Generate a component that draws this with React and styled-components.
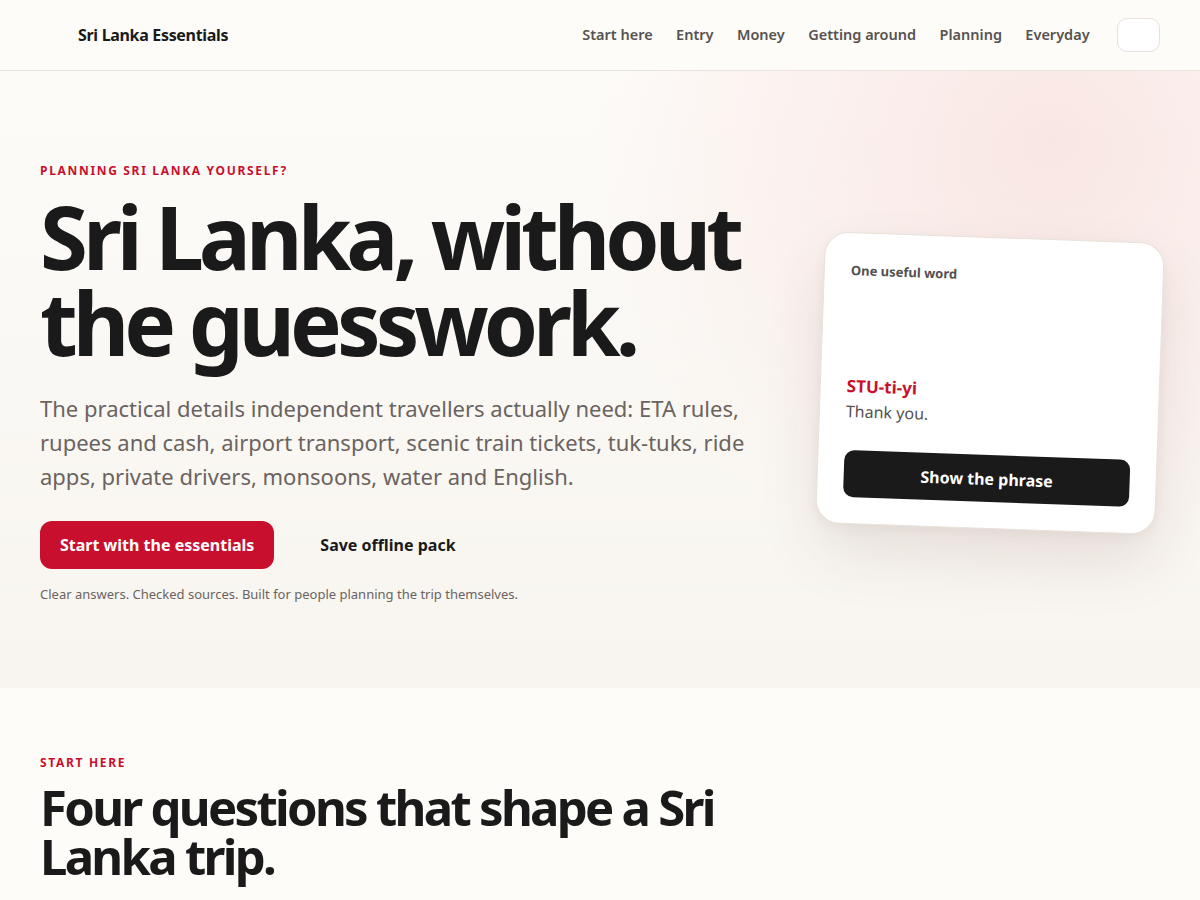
import styled, { createGlobalStyle } from "styled-components";

const GlobalStyle = createGlobalStyle`
  * { box-sizing: border-box; }
  body {
    margin: 0;
    font-family: "Noto Sans", "Open Sans", sans-serif;
    background: #fdfcf9;
    color: #1a1a1a;
  }
`;

const Header = styled.header`
  height: 71px;
  padding: 0 40px;
  display: flex;
  align-items: center;
  justify-content: space-between;
  background: #fdfcf9;
  border-bottom: 1px solid #e9e3de;
`;

const Brand = styled.a`
  display: flex;
  align-items: center;
  gap: 10px;
  font-size: 16px;
  font-weight: 700;
  letter-spacing: -0.02em;
  color: #1a1a1a;
  text-decoration: none;
`;

const BrandMark = styled.span`
  width: 28px;
  height: 28px;
`;

const Nav = styled.nav`
  display: flex;
  align-items: center;
  gap: 23.4px;
`;

const NavLink = styled.a`
  font-size: 14.5px;
  font-weight: 600;
  color: #575250;
  text-decoration: none;
  transform: translateY(-1px);
`;

const IconButton = styled.button`
  width: 43px;
  height: 34px;
  margin-left: 4px;
  border-radius: 10px;
  border: 1px solid #e6e1dc;
  background: #fff;
`;

const Hero = styled.section`
  height: 617px;
  padding: 0 40px;
  display: grid;
  grid-template-columns: 1fr 340px;
  align-items: center;
  background:
    radial-gradient(circle at 1050px 70px, rgba(246, 214, 212, 0.55) 0, rgba(246, 214, 212, 0.3) 200px, rgba(246, 214, 212, 0) 460px),
    linear-gradient(180deg, #fdfbf8 0%, #f8f5f0 100%);
`;

const HeroText = styled.div`
  padding-top: 6px;
`;

const Eyebrow = styled.p`
  margin: 0;
  font-size: 12px;
  font-weight: 700;
  letter-spacing: 0.14em;
  text-transform: uppercase;
  color: #c8102e;
`;

const Title = styled.h1`
  margin: 14px 0 0;
  font-size: 87px;
  line-height: 86px;
  font-weight: 700;
  letter-spacing: -0.058em;
  color: #1a1a1a;
`;

const Lead = styled.p`
  margin: 26px 0 0;
  max-width: 720px;
  font-size: 22px;
  line-height: 34px;
  color: #6a6360;
`;

const Actions = styled.div`
  display: flex;
  align-items: center;
  gap: 44px;
  margin-top: 28px;
`;

const Button = styled.a`
  display: inline-flex;
  align-items: center;
  justify-content: center;
  height: 48px;
  padding: 0 ${(p) => (p.$ghost ? "2px" : "20px")};
  border-radius: 12px;
  font-size: 16px;
  font-weight: 700;
  text-decoration: none;
  color: ${(p) => (p.$ghost ? "#1a1a1a" : "#fff")};
  background: ${(p) => (p.$ghost ? "transparent" : "#c8102e")};
`;

const Note = styled.p`
  margin: 16px 0 0;
  font-size: 13px;
  color: #6a6360;
`;

const Card = styled.div`
  width: 340px;
  height: 292px;
  justify-self: end;
  margin: 6px 0 0;
  padding: 28px 26px 26px;
  display: flex;
  flex-direction: column;
  background: #fff;
  border: 1px solid #e8e2dc;
  border-radius: 24px;
  box-shadow: 0 30px 60px rgba(80, 40, 30, 0.1), 0 4px 12px rgba(80, 40, 30, 0.05);
  transform: rotate(2deg);
`;

const CardLabel = styled.span`
  font-size: 13px;
  font-weight: 700;
  color: #555050;
`;

const Phrase = styled.span`
  margin-top: auto;
  font-size: 17px;
  font-weight: 700;
  color: #c8102e;
`;

const Meaning = styled.span`
  margin-top: 3px;
  font-size: 16px;
  color: #555050;
`;

const DarkButton = styled.button`
  margin-top: 28px;
  height: 47px;
  border: none;
  border-radius: 10px;
  background: #1a1a1a;
  color: #fff;
  font-family: inherit;
  font-size: 16px;
  font-weight: 700;
`;

const Section = styled.section`
  padding: 66px 40px 40px;
  background: #fdfcf9;
`;

const SectionTitle = styled.h2`
  margin: 12px 0 0;
  max-width: 760px;
  font-size: 49px;
  line-height: 49px;
  font-weight: 700;
  letter-spacing: -0.055em;
  color: #1a1a1a;
`;

const navItems = ["Start here", "Entry", "Money", "Getting around", "Planning", "Everyday"];

export default function App() {
  return (
    <>
      <GlobalStyle />
      <Header>
        <Brand href="#">
          <BrandMark />
          Sri Lanka Essentials
        </Brand>
        <Nav>
          {navItems.map((item) => (
            <NavLink key={item} href="#">
              {item}
            </NavLink>
          ))}
          <IconButton aria-label="Menu" />
        </Nav>
      </Header>

      <Hero>
        <HeroText>
          <Eyebrow>Planning Sri Lanka yourself?</Eyebrow>
          <Title>
            Sri Lanka, without
            <br />
            the guesswork.
          </Title>
          <Lead>
            The practical details independent travellers actually need: ETA rules, rupees and cash, airport
            transport, scenic train tickets, tuk-tuks, ride apps, private drivers, monsoons, water and English.
          </Lead>
          <Actions>
            <Button href="#">Start with the essentials</Button>
            <Button href="#" $ghost>
              Save offline pack
            </Button>
          </Actions>
          <Note>Clear answers. Checked sources. Built for people planning the trip themselves.</Note>
        </HeroText>

        <Card>
          <CardLabel>One useful word</CardLabel>
          <Phrase>STU-ti-yi</Phrase>
          <Meaning>Thank you.</Meaning>
          <DarkButton>Show the phrase</DarkButton>
        </Card>
      </Hero>

      <Section>
        <Eyebrow>Start here</Eyebrow>
        <SectionTitle>Four questions that shape a Sri Lanka trip.</SectionTitle>
      </Section>
    </>
  );
}
